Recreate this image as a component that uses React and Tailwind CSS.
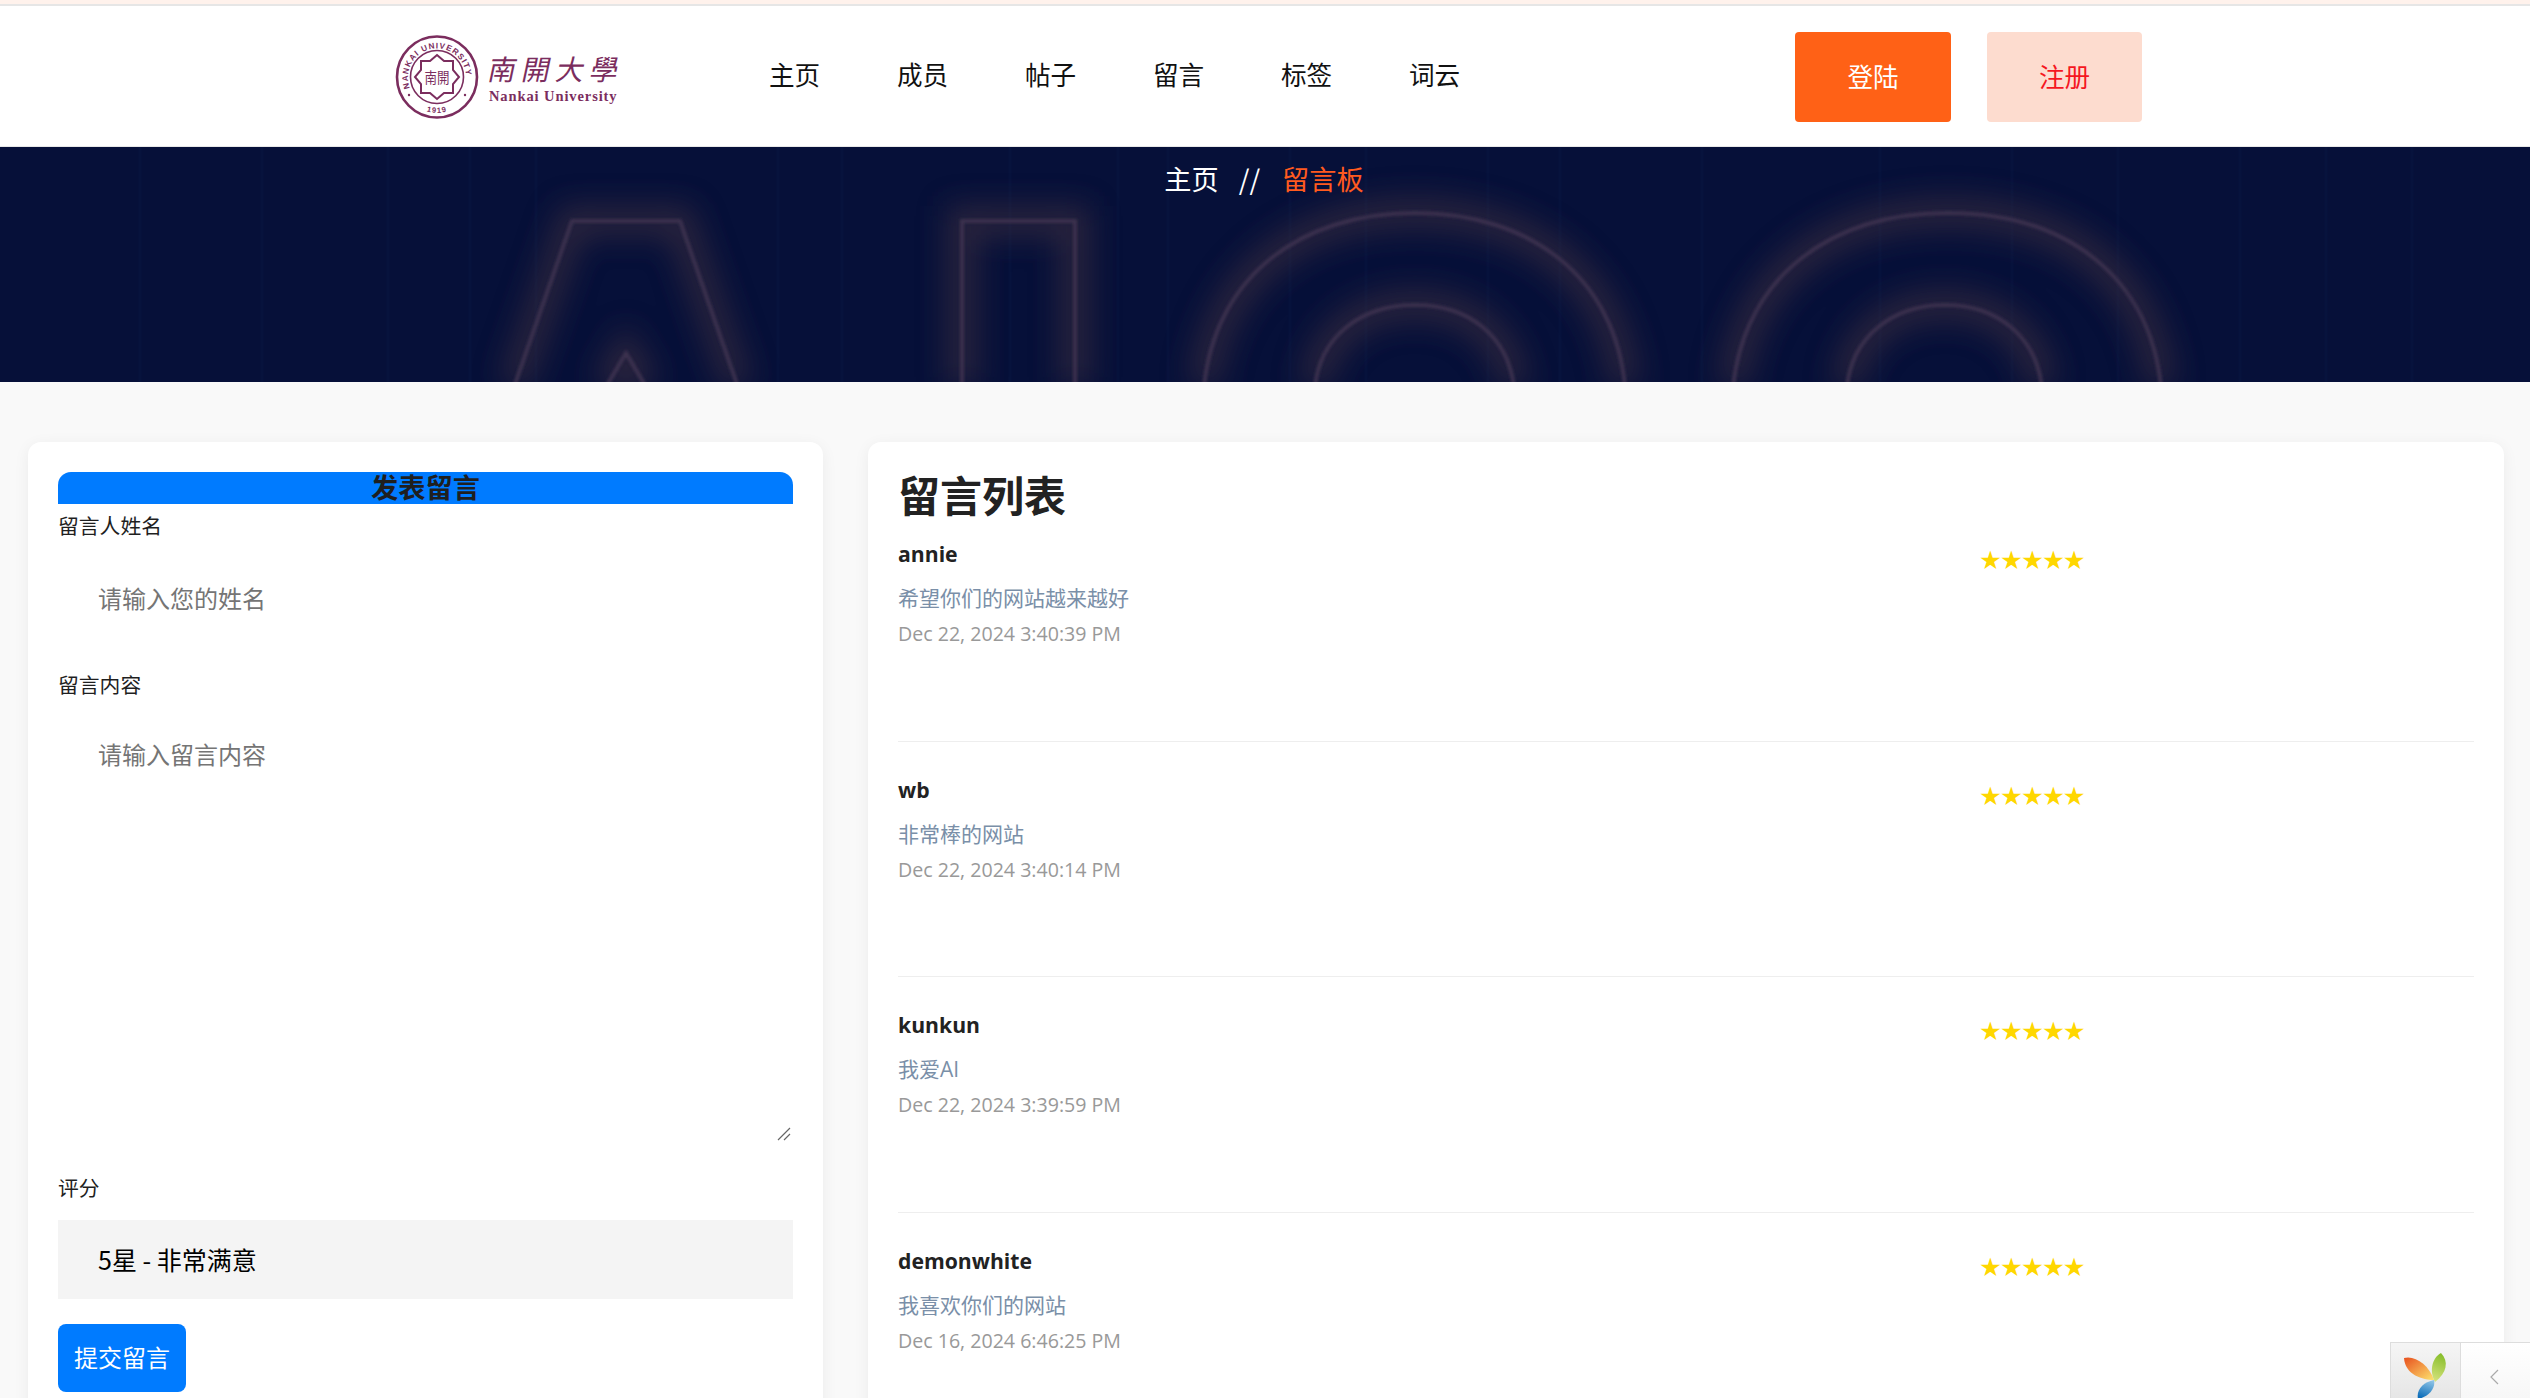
import React from 'react';

const navItems = ['主页', '成员', '帖子', '留言', '标签', '词云'];

const messages = [
  { name: 'annie', text: '希望你们的网站越来越好', date: 'Dec 22, 2024 3:40:39 PM' },
  { name: 'wb', text: '非常棒的网站', date: 'Dec 22, 2024 3:40:14 PM' },
  { name: 'kunkun', text: '我爱AI', date: 'Dec 22, 2024 3:39:59 PM' },
  { name: 'demonwhite', text: '我喜欢你们的网站', date: 'Dec 16, 2024 6:46:25 PM' },
];

// faint vertical streaks of the hero picture
const streaks = [140, 262, 388, 470, 536, 778, 842, 1010, 1118, 1168, 1290, 1366, 1488, 1560, 1702, 1880, 2012, 2118, 2240, 2326, 2412];

const Seal = () => (
  <svg width="84" height="84" viewBox="0 0 84 84" className="shrink-0">
    <defs>
      <path id="sealTop" d="M 15 53 A 29 29 0 1 1 69 53" fill="none" />
      <path id="sealBottom" d="M 27 74.6 A 36 36 0 0 0 57 74.6" fill="none" />
    </defs>
    <ellipse cx="42" cy="42" rx="40" ry="40.5" fill="none" stroke="#7b2d5e" strokeWidth="2.6" />
    <circle cx="42" cy="42" r="26.5" fill="none" stroke="#7b2d5e" strokeWidth="1.6" />
    <text fontFamily="'Liberation Sans', sans-serif" fontWeight="700" fontSize="8.2" fill="#7b2d5e" letterSpacing="1">
      <textPath href="#sealTop">NANKAI UNIVERSITY</textPath>
    </text>
    <text fontFamily="'Liberation Sans', sans-serif" fontWeight="700" fontSize="7.6" fill="#7b2d5e" letterSpacing="1">
      <textPath href="#sealBottom" startOffset="16%">1919</textPath>
    </text>
    <circle cx="14" cy="60" r="1.2" fill="#7b2d5e" />
    <circle cx="70" cy="60" r="1.2" fill="#7b2d5e" />
    <path
      d="M42 20 L49 26 L58 26 L58 35 L64 42 L58 49 L58 58 L49 58 L42 64 L35 58 L26 58 L26 49 L20 42 L26 35 L26 26 L35 26 Z"
      fill="none"
      stroke="#7b2d5e"
      strokeWidth="2"
    />
    <text x="42" y="48" textAnchor="middle" fontFamily="'Noto Sans CJK TC', sans-serif" fontSize="15" fill="#7b2d5e" textLength="25" lengthAdjust="spacingAndGlyphs">
      南開
    </text>
  </svg>
);

const Logo = () => (
  <div className="w-[374px] mt-[2px] flex items-center gap-[10px] shrink-0">
    <Seal />
    <div className="flex flex-col">
      <span className="font-['Noto_Sans_CJK_TC',sans-serif] text-[28px] leading-[38px] tracking-[6px] text-[#7b2d5e] -skew-x-12 whitespace-nowrap">南開大學</span>
      <span className="font-['Liberation_Serif',serif] font-bold text-[14.5px] leading-[18px] tracking-[0.9px] text-[#7b2d5e] whitespace-nowrap">Nankai University</span>
    </div>
  </div>
);

const HeroArt = () => (
  <svg className="absolute inset-0 w-full h-full" viewBox="0 0 2530 235" preserveAspectRatio="none">
    <defs>
      <filter id="soft" x="-20%" y="-40%" width="140%" height="180%">
        <feGaussianBlur stdDeviation="15" />
      </filter>
      <filter id="fine" x="-5%" y="-5%" width="110%" height="110%">
        <feGaussianBlur stdDeviation="1.5" />
      </filter>
      <g id="letters" fill="none">
        <path d="M514 240 L572 74 L680 74 L738 240" />
        <path d="M606 240 L626 206 L646 240" />
        <path d="M962 240 L962 74 L1075 74 L1075 240" />
        <path d="M1204 240 C1215 130 1300 66 1415 66 C1530 66 1615 130 1625 240" />
        <path d="M1315 240 C1320 190 1360 158 1415 158 C1470 158 1508 190 1514 240" />
        <path d="M1733 240 C1745 130 1830 66 1948 66 C2066 66 2150 130 2161 240" />
        <path d="M1847 240 C1852 190 1892 158 1945 158 C1998 158 2036 190 2042 240" />
      </g>
    </defs>
    <rect width="2530" height="235" fill="#061039" />
    <g stroke="#0b1a48" strokeWidth="3" opacity="0.3">
      {streaks.map((x) => (
        <path key={x} d={`M${x} 0 L${x} 235`} />
      ))}
    </g>
    <use href="#letters" stroke="#4a3640" strokeWidth="30" opacity="0.55" filter="url(#soft)" />
    <use href="#letters" stroke="#3c3350" strokeWidth="3.5" filter="url(#fine)" />
  </svg>
);

const YiiLogo = () => (
  <svg width="46" height="46" viewBox="0 0 46 46">
    <defs>
      <linearGradient id="yiiOrange" x1="0" y1="0" x2="1" y2="1">
        <stop offset="0" stopColor="#e8501e" />
        <stop offset="1" stopColor="#fde46f" />
      </linearGradient>
      <linearGradient id="yiiGreen" x1="0.6" y1="0" x2="0.4" y2="1">
        <stop offset="0" stopColor="#86bd2a" />
        <stop offset="1" stopColor="#d4e27c" />
      </linearGradient>
      <linearGradient id="yiiBlue" x1="0.4" y1="1" x2="0.7" y2="0">
        <stop offset="0" stopColor="#0b6cb8" />
        <stop offset="1" stopColor="#8dc3e6" />
      </linearGradient>
    </defs>
    <path d="M1 5 C12 2 26 12 31 27 C20 27 2 22 1 5 Z" fill="url(#yiiOrange)" />
    <path d="M38 0 C46 8 44 20 32 29 C26 18 29 5 38 0 Z" fill="url(#yiiGreen)" />
    <path d="M31 27 C33 36 25 44 15 46 C13 37 20 29 31 27 Z" fill="url(#yiiBlue)" />
  </svg>
);

const App = () => {
  return (
    <div className="relative w-[2530px] h-[1398px] overflow-hidden bg-[#f9f9f9] font-['Open_Sans','Noto_Sans_CJK_SC',sans-serif] text-[#1f1f1f]">
      <div className="h-[4px] bg-[#fff2ec]" />
      <div className="h-[2px] bg-[#e6e6e6]" />

      <header className="h-[141px] bg-white flex items-center pl-[395px] border-b border-[#e8e8e8]">
        <Logo />
        <nav className="flex gap-[76.8px] -mt-[3px]">
          {navItems.map((item) => (
            <a key={item} className="text-[25.6px] text-[#111] font-['Noto_Sans_CJK_SC',sans-serif]">{item}</a>
          ))}
        </nav>
        <div className="ml-auto pr-[388px] flex gap-[36px] mt-[1px]">
          <button className="w-[156px] h-[90px] rounded-[4px] bg-[#ff6116] text-white text-[25.6px] font-['Noto_Sans_CJK_SC',sans-serif]">登陆</button>
          <button className="w-[155px] h-[90px] rounded-[4px] bg-[#fddccf] text-[#f5171f] text-[25.6px] font-['Noto_Sans_CJK_SC',sans-serif]">注册</button>
        </div>
      </header>

      <section className="relative h-[235px] bg-[#061039] overflow-hidden">
        <HeroArt />
        <div className="relative flex justify-center gap-[22px] pt-[11px] text-[27.2px] leading-[40px] font-['Noto_Sans_CJK_SC',sans-serif]">
          <span className="text-white -mr-[1px] -ml-[2px]">主页</span>
          <span className="text-white -ml-[1px]">//</span>
          <span className="text-[#ff5a1f]">留言板</span>
        </div>
      </section>

      <main className="flex gap-[45px] pl-[28px] pr-[26px] pt-[60px]">
        <div className="w-[795px] shrink-0 bg-white rounded-[13px] shadow-[0_3px_16px_rgba(0,0,0,0.06)] px-[30px] pt-[30px] pb-[30px]">
          <h2 className="h-[32px] bg-[#007bff] rounded-t-[13px] text-center text-[27.2px] leading-[32px] font-bold text-[#1f1f1f]">发表留言</h2>
          <label className="block mt-[6px] text-[20.8px] leading-[32px]">留言人姓名</label>
          <input
            placeholder="请输入您的姓名"
            className="block w-full h-[80px] mt-[16px] px-[40px] bg-white text-[24px] outline-none placeholder:text-[#757575]"
          />
          <label className="block mt-[31px] text-[20.8px] leading-[32px]">留言内容</label>
          <div className="relative mt-[16px]">
            <textarea
              placeholder="请输入留言内容"
              className="block w-full h-[426px] px-[40px] pt-[20px] bg-white text-[24px] leading-[36px] outline-none resize-none placeholder:text-[#757575]"
            />
            <svg className="absolute right-[2px] bottom-[2px]" width="14" height="14" viewBox="0 0 14 14">
              <path d="M1 13 L13 1 M7 13 L13 7" stroke="#666" strokeWidth="1.2" fill="none" />
            </svg>
          </div>
          <label className="block mt-[29px] text-[20.8px] leading-[32px]">评分</label>
          <select className="block w-full h-[79px] mt-[16px] pl-[40px] bg-[#f4f4f4] text-[25px] text-black appearance-none outline-none font-['Noto_Sans_CJK_SC',sans-serif]">
            <option>5星 - 非常满意</option>
          </select>
          <button className="block w-[128px] h-[68px] mt-[25px] rounded-[8px] bg-[#007bff] text-white text-[24px]">提交留言</button>
        </div>

        <div className="flex-1 bg-white rounded-[13px] shadow-[0_3px_16px_rgba(0,0,0,0.06)] px-[30px] pt-[30px] pb-[30px]">
          <h2 className="h-[48px] mb-[19px] text-[42px] leading-[48px] font-bold text-[#222]">留言列表</h2>
          {messages.map((m) => (
            <div key={m.name} className="h-[202.5px] mb-[33px] border-b border-[#eeeeee] flex">
              <div className="w-[1081px] shrink-0">
                <div className="-mt-[1px] text-[21.2px] leading-[32px] font-bold text-[#222]">{m.name}</div>
                <p className="mt-[12px] text-[21px] leading-[32px] text-[#7a8fa8]">{m.text}</p>
                <p className="mt-[5px] text-[19.6px] leading-[30px] text-[#999999]">{m.date}</p>
              </div>
              <div className="font-['DejaVu_Sans',sans-serif] text-[25.5px] tracking-[-1.9px] leading-[42px] text-[#ffd700]">★★★★★</div>
            </div>
          ))}
        </div>
      </main>

      <div className="absolute right-0 bottom-0 flex h-[56px] border-t border-l border-[#dddddd] bg-white">
        <div className="w-[70px] border-r border-[#dddddd] bg-gradient-to-b from-[#f5f5f5] to-[#e6e6e6] flex justify-center pt-[10px]">
          <YiiLogo />
        </div>
        <div className="w-[69px] bg-gradient-to-b from-white to-[#f7f7f7] flex justify-center pt-[26px]">
          <svg width="10" height="16" viewBox="0 0 10 16" className="ml-[-2px]">
            <path d="M8 1 L1 8 L8 15" stroke="#aaa" strokeWidth="1.2" fill="none" />
          </svg>
        </div>
      </div>
    </div>
  );
};

export default App;
